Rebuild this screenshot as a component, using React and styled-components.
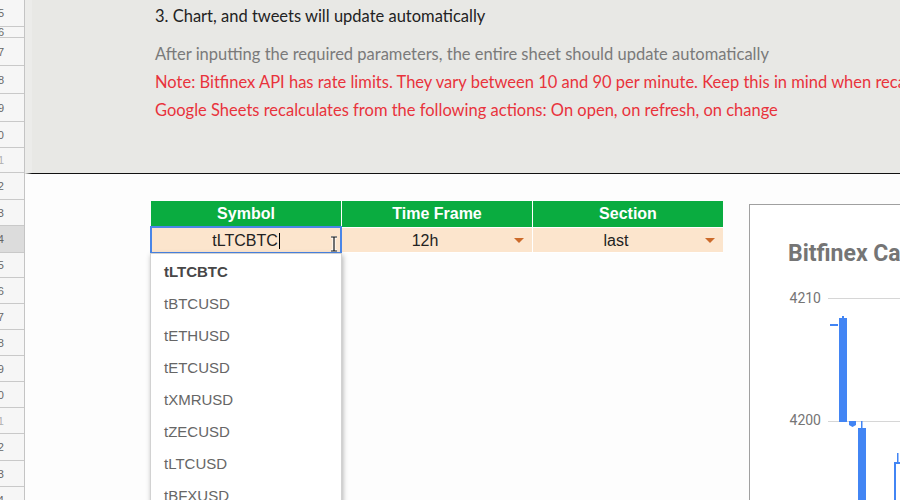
import React from "react";
import styled, { createGlobalStyle } from "styled-components";

const GlobalStyle = createGlobalStyle`
  html, body {
    margin: 0;
    padding: 0;
    background: #fdfdfd;
    font-family: "Liberation Sans", Arial, sans-serif;
  }
  * { box-sizing: border-box; }
`;

const rows = [
  { n: 5, h: 27 }, { n: 6, h: 11 }, { n: 7, h: 28 }, { n: 8, h: 28 },
  { n: 9, h: 28 }, { n: 10, h: 26 }, { n: 11, h: 25, dim: true }, { n: 12, h: 27 },
  { n: 13, h: 26 }, { n: 14, h: 27, active: true }, { n: 15, h: 25 }, { n: 16, h: 26 },
  { n: 17, h: 26 }, { n: 18, h: 26 }, { n: 19, h: 26 }, { n: 20, h: 26 },
  { n: 21, h: 26, dim: true }, { n: 22, h: 27 }, { n: 23, h: 26 }, { n: 24, h: 26 },
];

const symbols = ["tLTCBTC", "tBTCUSD", "tETHUSD", "tETCUSD", "tXMRUSD", "tZECUSD", "tLTCUSD", "tBFXUSD"];

const Page = styled.div`
  display: flex;
  width: 900px;
  height: 500px;
  overflow: hidden;
`;

const RowHeader = styled.div`
  flex-shrink: 0;
  width: 25px;
  display: flex;
  flex-direction: column;
  border-right: 1px solid #c4c4c4;
  background: #f6f6f6;
`;

const RowCell = styled.div`
  height: ${p => p.$h}px;
  flex-shrink: 0;
  display: flex;
  justify-content: flex-end;
  align-items: center;
  overflow: hidden;
  border-bottom: 1px solid #c9c9c9;
  background: ${p => (p.$active ? "#dcdcdc" : "transparent")};
  font-size: 11px;
  color: ${p => (p.$dim ? "#b0b0b0" : "#666")};

  span {
    flex-shrink: 0;
    margin-right: 20px;
    white-space: nowrap;
  }
`;

const Sheet = styled.div`
  flex: 1;
  min-width: 0;
  display: flex;
  flex-direction: column;
  overflow: hidden;
`;

const NotesPanel = styled.div`
  height: 174px;
  flex-shrink: 0;
  padding-left: 130px;
  background: #e8e8e5;
  border-bottom: 1px solid #111;
  border-left: 7px solid #ececea;
  font-family: Lato, "Open Sans", sans-serif;
  font-size: 16.5px;
  white-space: nowrap;
  overflow: hidden;
`;

const StepLine = styled.div`
  height: 32px;
  line-height: 32px;
  margin-bottom: 8px;
  margin-left: -7px;
  color: #222;
`;

const NoteLine = styled.div`
  height: 28px;
  line-height: 28px;
  margin-left: -7px;
  color: ${p => (p.$warn ? "#e8333c" : "#7a7a7a")};
`;

const GridArea = styled.div`
  display: flex;
  align-items: flex-start;
  gap: 26px;
  padding: 27px 0 0 126px;
`;

const Table = styled.div`
  flex-shrink: 0;
  display: grid;
  grid-template-columns: repeat(3, 190px);
  grid-auto-rows: 26px;
  column-gap: 1px;
  background: #ffffff;
`;

const HeadCell = styled.div`
  display: flex;
  align-items: center;
  justify-content: center;
  padding-top: 1px;
  background: #0aac40;
  color: #fff;
  font-weight: 700;
  font-size: 16px;
  border-bottom: 1px solid #0aac40;
`;

const DataCell = styled.div`
  position: relative;
  display: flex;
  align-items: center;
  justify-content: center;
  padding-top: 1px;
  padding-right: ${p => (p.$chip ? "24px" : "0")};
  background: #fce5cd;
  color: #222;
  font-size: 16px;
  margin-top: 1px;
  height: 24px;
`;

const SelectedCell = styled(DataCell)`
  &::after {
    content: "";
    position: absolute;
    inset: -2px -1px -2px -1px;
    border: 2px solid #4a86e8;
    pointer-events: none;
  }
`;

const Caret = styled.span`
  display: inline-block;
  width: 1px;
  height: 16px;
  margin-left: 1px;
  background: #000;
`;

const Arrow = styled.span`
  position: absolute;
  right: 8px;
  top: 10px;
  width: 0;
  height: 0;
  border-left: 5px solid transparent;
  border-right: 5px solid transparent;
  border-top: 5px solid #cc6a2a;
`;

const Beam = styled.svg`
  position: absolute;
  right: 3px;
  top: 8px;
`;

const Dropdown = styled.div`
  position: absolute;
  top: 25px;
  left: -1px;
  width: 192px;
  height: 300px;
  padding-top: 2px;
  background: #fff;
  border: 1px solid #d2d2d2;
  box-shadow: 1px 2px 5px rgba(0, 0, 0, 0.3);
  z-index: 2;
`;

const Option = styled.div`
  height: 32px;
  line-height: 32px;
  padding-left: 13px;
  font-size: 15px;
  font-weight: ${p => (p.$current ? 700 : 400)};
  color: ${p => (p.$current ? "#474747" : "#666")};
`;

const ChartCard = styled.div`
  flex-shrink: 0;
  width: 420px;
  height: 400px;
  margin-top: 3px;
  background: #fff;
  border: 1px solid #a0a0a0;
  font-family: Roboto, sans-serif;
`;

const ChartTitle = styled.div`
  padding: 35px 0 0 38px;
  height: 62px;
  font-size: 23px;
  font-weight: 700;
  color: #757575;
  white-space: nowrap;
`;

const Plot = styled.svg`
  display: block;
  margin-top: 13px;
`;

const IBeam = () => (
  <Beam width="8" height="16" viewBox="0 0 8 16">
    <path d="M1 1h6M4 1v14M1 15h6" stroke="#fff" strokeWidth="3" fill="none" />
    <path d="M1 1h6M4 1v14M1 15h6" stroke="#111" strokeWidth="1.2" fill="none" />
  </Beam>
);

const CandleChart = () => (
  <Plot width="300" height="240" viewBox="0 0 300 240">
    <text x="71" y="23" textAnchor="end" fontSize="14" fill="#757575">4210</text>
    <line x1="78" x2="300" y1="18.5" y2="18.5" stroke="#d6d6d6" />
    <text x="71" y="145" textAnchor="end" fontSize="14" fill="#757575">4200</text>
    <line x1="78" x2="300" y1="141.5" y2="141.5" stroke="#d6d6d6" />
    <rect x="80" y="44" width="8" height="2" fill="#4285f4" />
    <rect x="92" y="36" width="2" height="3" fill="#4285f4" />
    <rect x="89" y="38" width="8" height="104" fill="#4285f4" />
    <path d="M99 141h7v4l-3.5 2l-3.5-2z" fill="#4285f4" />
    <rect x="111" y="141" width="1.5" height="8" fill="#4285f4" />
    <rect x="108" y="148" width="8" height="92" fill="#4285f4" />
    <rect x="147" y="173" width="1.5" height="10" fill="#4285f4" />
    <rect x="145" y="183" width="8" height="60" fill="#fff" stroke="#4285f4" strokeWidth="2" />
  </Plot>
);

export default function App() {
  return (
    <>
      <GlobalStyle />
      <Page>
        <RowHeader>
          {rows.map(r => (
            <RowCell key={r.n} $h={r.h} $active={r.active} $dim={r.dim}>
              <span>{r.n}</span>
            </RowCell>
          ))}
        </RowHeader>
        <Sheet>
          <NotesPanel>
            <StepLine>3. Chart, and tweets will update automatically</StepLine>
            <NoteLine>After inputting the required parameters, the entire sheet should update automatically</NoteLine>
            <NoteLine $warn>Note: Bitfinex API has rate limits. They vary between 10 and 90 per minute. Keep this in mind when recalculating</NoteLine>
            <NoteLine $warn>Google Sheets recalculates from the following actions: On open, on refresh, on change</NoteLine>
          </NotesPanel>
          <GridArea>
            <Table>
              <HeadCell>Symbol</HeadCell>
              <HeadCell>Time Frame</HeadCell>
              <HeadCell>Section</HeadCell>
              <SelectedCell>
                tLTCBTC<Caret />
                <IBeam />
                <Dropdown>
                  {symbols.map((s, i) => (
                    <Option key={s} $current={i === 0}>{s}</Option>
                  ))}
                </Dropdown>
              </SelectedCell>
              <DataCell $chip>
                12h<Arrow />
              </DataCell>
              <DataCell $chip>
                last<Arrow />
              </DataCell>
            </Table>
            <ChartCard>
              <ChartTitle>Bitfinex Candlestick Chart</ChartTitle>
              <CandleChart />
            </ChartCard>
          </GridArea>
        </Sheet>
      </Page>
    </>
  );
}
